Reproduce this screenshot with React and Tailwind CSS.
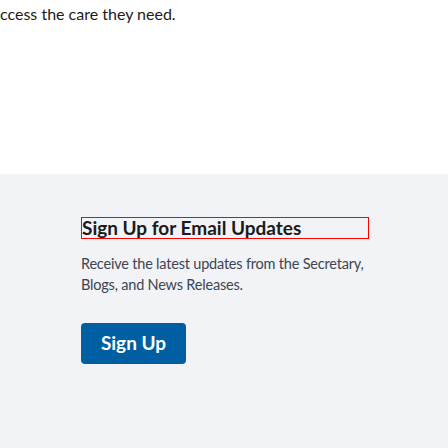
export default function App() {
  const font = { fontFamily: 'Lato, "Noto Sans", sans-serif' };
  return (
    <div className="w-[448px] h-[448px] bg-white overflow-hidden" style={font}>
      <div className="h-[174px] pt-[4px]">
        <p className="text-[16px] leading-[20px] text-[#1b1b1b]">ccess the care they need.</p>
      </div>
      <div className="bg-[#f1f3f6] h-[274px] pl-[81px] pt-[40px]">
        <div className="w-[288px]">
          <h2 className="mt-[3px] border border-[#ff0000] h-[22px] text-[19px] leading-[20px] font-bold text-[#1b1b1b]">
            Sign Up for Email Updates
          </h2>
          <p className="mt-[14px] text-[14.5px] leading-[21px] tracking-[-0.2px] text-[#3d4551]">
            Receive the latest updates from the Secretary, Blogs, and News Releases.
          </p>
          <button className="mt-[28px] w-[105px] h-[41px] rounded-[4px] bg-[#005ea2] text-white text-[19px] font-bold">
            Sign Up
          </button>
        </div>
      </div>
    </div>
  );
}
